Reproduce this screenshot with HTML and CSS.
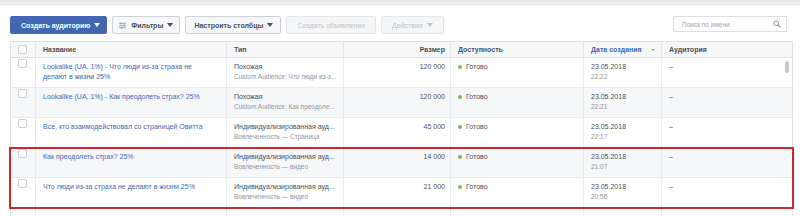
FILE: index.html
```html
<!DOCTYPE html>
<html lang="ru">
<head>
<meta charset="utf-8">
<title>Аудитории</title>
<link rel="stylesheet" href="styles.css">
</head>
<body>
<div class="topband"></div>
<div class="toolbar">
  <button class="btn primary">Создать аудиторию <span class="caret"></span></button>
  <button class="btn filter"><svg class="ficon" width="7" height="7" viewBox="0 0 8 7"><path d="M0 1h8M0 3.5h8M0 6h8" stroke="#90949c" stroke-width="0.9"/><rect x="1.5" y="0" width="1.4" height="2" fill="#90949c"/><rect x="5" y="2.5" width="1.4" height="2" fill="#90949c"/><rect x="2.5" y="5" width="1.4" height="2" fill="#90949c"/></svg>Фильтры <span class="caret"></span></button>
  <button class="btn">Настроить столбцы <span class="caret"></span></button>
  <button class="btn disabled">Создать объявление</button>
  <button class="btn disabled">Действия <span class="caret light"></span></button>
  <div class="spacer"></div>
  <div class="search"><span class="ph">Поиск по имени</span><svg width="8" height="8" viewBox="0 0 8 8"><circle cx="3.2" cy="3.2" r="2.4" fill="none" stroke="#90949c" stroke-width="1"/><path d="M5 5l2.4 2.4" stroke="#90949c" stroke-width="1.1"/></svg></div>
</div>
<div class="tablewrap">
  <table class="grid">
    <colgroup>
      <col class="c-chk"><col class="c-name"><col class="c-type"><col class="c-size"><col class="c-avail"><col class="c-date"><col class="c-aud">
    </colgroup>
    <thead>
      <tr>
        <th><span class="chk"></span></th>
        <th>Название</th>
        <th>Тип</th>
        <th class="num">Размер</th>
        <th>Доступность</th>
        <th class="sorted"><span class="sortwrap">Дата создания <span class="sortarrow"></span></span></th>
        <th>Аудитория</th>
      </tr>
    </thead>
    <tbody>
      <tr>
        <td><span class="chk"></span></td>
        <td class="name"><a>Lookalike (UA, 1%) - Что люди из-за страха не делают в жизни 25%</a></td>
        <td><div class="main">Похожая</div><div class="sub">Custom Audience: Что люди из-з...</div></td>
        <td class="num">120 000</td>
        <td><span class="dot"></span>Готово</td>
        <td><div class="main">23.05.2018</div><div class="sub">22:22</div></td>
        <td>–</td>
      </tr>
      <tr class="alt">
        <td><span class="chk"></span></td>
        <td class="name"><a>Lookalike (UA, 1%) - Как преодолеть страх? 25%</a></td>
        <td><div class="main">Похожая</div><div class="sub">Custom Audience: Как преодоле...</div></td>
        <td class="num">120 000</td>
        <td><span class="dot"></span>Готово</td>
        <td><div class="main">23.05.2018</div><div class="sub">22:21</div></td>
        <td>–</td>
      </tr>
      <tr>
        <td><span class="chk"></span></td>
        <td class="name"><a>Все, кто взаимодействовал со страницей Овитта</a></td>
        <td><div class="main">Индивидуализированная ауд...</div><div class="sub">Вовлеченность — Страница</div></td>
        <td class="num">45 000</td>
        <td><span class="dot"></span>Готово</td>
        <td><div class="main">23.05.2018</div><div class="sub">22:17</div></td>
        <td>–</td>
      </tr>
      <tr class="alt">
        <td><span class="chk"></span></td>
        <td class="name"><a>Как преодолеть страх? 25%</a></td>
        <td><div class="main">Индивидуализированная ауд...</div><div class="sub">Вовлеченность — видео</div></td>
        <td class="num">14 000</td>
        <td><span class="dot"></span>Готово</td>
        <td><div class="main">23.05.2018</div><div class="sub">21:07</div></td>
        <td>–</td>
      </tr>
      <tr>
        <td><span class="chk"></span></td>
        <td class="name"><a>Что люди из-за страха не делают в жизни 25%</a></td>
        <td><div class="main">Индивидуализированная ауд...</div><div class="sub">Вовлеченность — видео</div></td>
        <td class="num">21 000</td>
        <td><span class="dot"></span>Готово</td>
        <td><div class="main">23.05.2018</div><div class="sub">20:56</div></td>
        <td>–</td>
      </tr>
      <tr>
        <td></td><td></td><td></td><td></td><td></td><td></td><td></td>
      </tr>
    </tbody>
  </table>
  <div class="scrollthumb"></div>
  <div class="highlight"></div>
</div>
</body>
</html>
```
FILE: styles.css
```css
* { box-sizing: border-box; }
html, body { margin: 0; padding: 0; background: #fff; overflow: hidden; }
body {
  font-family: "Liberation Sans", Arial, sans-serif;
  font-size: 7px;
  color: #4b4f56;
  width: 800px;
  height: 216px;
}
.topband {
  height: 5px;
  background: linear-gradient(#e4e6e9, #f1f2f4);
  border-bottom: 1px solid #e3e5e8;
}
.toolbar {
  display: flex;
  align-items: flex-start;
  gap: 5px;
  padding: 11px 13px 0 10px;
  height: 36px;
}
.btn {
  font-family: inherit;
  font-size: 7px;
  font-weight: bold;
  height: 18px;
  padding: 0 7px 0 8px;
  border: 1px solid #ced0d4;
  border-radius: 2px;
  background: #f6f7f9;
  color: #4b4f56;
  display: flex;
  align-items: center;
  gap: 3px;
  margin: 0;
}
.btn.primary {
  background: #4267b2;
  border-color: #4267b2;
  color: #fff;
  padding: 0 6px 0 10px;
}
.btn.filter { padding: 0 6px 0 6px; }
.btn.disabled {
  color: #bec2c9;
  border-color: #e4e6e9;
  background: #f5f6f7;
  font-weight: normal;
  padding: 0 10px;
}
.caret {
  width: 0; height: 0;
  border-left: 3.5px solid transparent;
  border-right: 3.5px solid transparent;
  border-top: 4px solid currentColor;
  display: inline-block;
  margin-left: 1px;
}
.caret.light { border-top-color: #bec2c9; }
.ficon { margin-right: 2px; }
.spacer { flex: 1; }
.search {
  width: 114px;
  height: 16px;
  border: 1px solid #dddfe2;
  background: #fff;
  display: flex;
  align-items: center;
  justify-content: space-between;
  padding: 0 5px 0 8px;
}
.ph { color: #a0a4ab; font-size: 6.5px; }

.tablewrap { position: relative; padding-left: 10px; }
.grid {
  width: 782px;
  border-collapse: collapse;
  table-layout: fixed;
  border: 1px solid #dddfe2;
}
.c-chk { width: 25px; }
.c-name { width: 191px; }
.c-type { width: 117px; }
.c-size { width: 107px; }
.c-avail { width: 133px; }
.c-date { width: 78px; }
.c-aud { width: 131px; }
th {
  height: 16px;
  background: #f6f7f9;
  border-left: 1px solid #e5e7ea;
  border-bottom: 1px solid #dddfe2;
  text-align: left;
  font-weight: bold;
  padding: 0 7px;
  font-size: 7px;
  color: #4b4f56;
  white-space: nowrap;
}
th:first-child, td:first-child { border-left: none; padding: 0 0 0 7px; }
th.num, td.num { text-align: right; padding-right: 5px; }
th.sorted { color: #4267b2; }
.sortwrap { display: flex; justify-content: space-between; align-items: center; }
.sortarrow {
  width: 0; height: 0;
  border-left: 2px solid transparent;
  border-right: 2px solid transparent;
  border-top: 2.5px solid #90949c;
  margin-right: -1px;
}
td {
  height: 30px;
  border-left: 1px solid #e9ebee;
  border-bottom: 1px solid #e9ebee;
  vertical-align: top;
  padding: 4px 7px 0;
  line-height: 10px;
  white-space: nowrap;
  overflow: hidden;
}
tr.alt td { background: #f6f7f9; }
td.name { white-space: normal; padding-right: 14px; }
td.name a { color: #4267b2; }
.sub { color: #90949c; font-size: 6.5px; line-height: 10px; }
.chk {
  display: inline-block;
  width: 9px; height: 9px;
  border: 1px solid #ccd0d5;
  border-radius: 2px;
  background: #fff;
  vertical-align: middle;
}
td .chk { margin-top: 1px; }
.dot {
  display: inline-block;
  width: 4px; height: 4px;
  border-radius: 50%;
  background: #7cb35e;
  margin: 0 4px 1px 0;
  vertical-align: middle;
}
.scrollthumb {
  position: absolute;
  left: 785px;
  top: 20px;
  width: 4px;
  height: 12px;
  border-radius: 2px;
  background: #c4c7cc;
}
.highlight {
  position: absolute;
  left: 9px;
  top: 106px;
  width: 785px;
  height: 62px;
  border: 2px solid #c8282e;
  pointer-events: none;
}
```
